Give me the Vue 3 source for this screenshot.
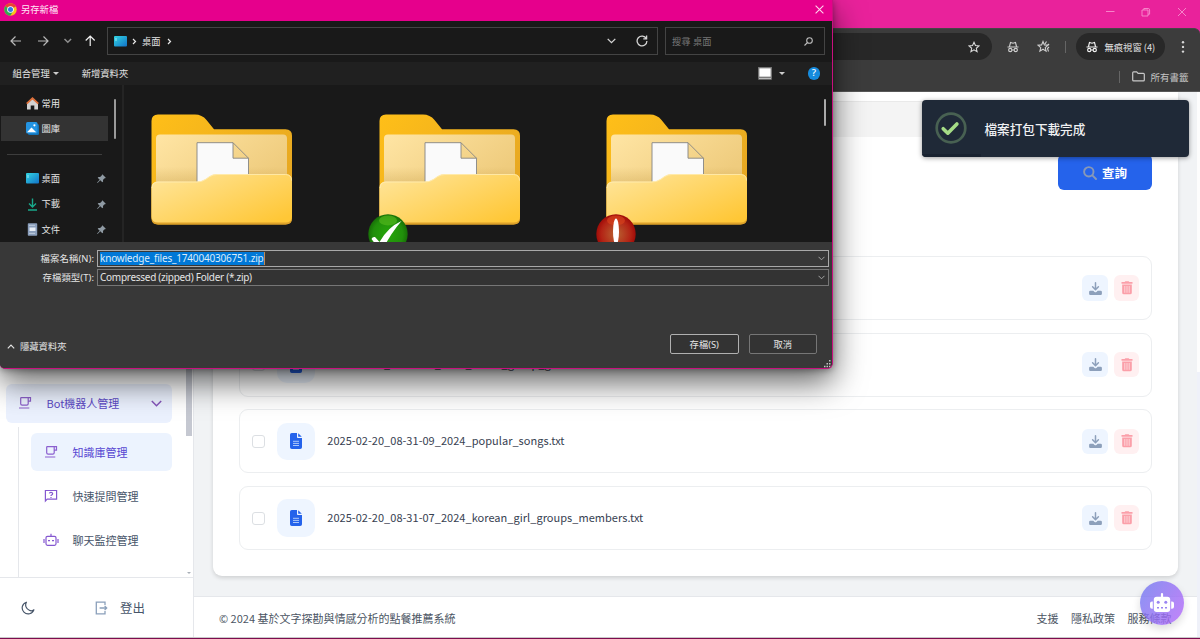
<script setup>
const files = [
  '2025-02-20_08-31-12_2024_taiwan_bands.txt',
  '2025-02-20_08-31-11_2024_tiktok_group_gala.txt',
  '2025-02-20_08-31-09_2024_popular_songs.txt',
  '2025-02-20_08-31-07_2024_korean_girl_groups_members.txt'
]
const folders = ['', 'ok', 'bad']
const pinned = [
  { name: '桌面', icon: 'desktop' },
  { name: '下載', icon: 'down' },
  { name: '文件', icon: 'doc' }
]
</script>

<template>
  <div class="screen">
    <header class="titlebar">
      <svg class="winbtns" width="90" height="12" viewBox="0 0 90 12" fill="none" stroke="#f78fce" stroke-width="0.9">
        <path d="M1 5.500h8.500M37 4h6v6h-6zM38.800 4V2.500h4.400q1.400 0 1.400 1.400v4.300H43M73 2l8 8M81 2l-8 8" />
      </svg>
    </header>
    <div class="chrome">
      <div class="toolbar">
        <div class="omnibox">
          <svg width="12" height="12" viewBox="0 0 24 24" fill="none" stroke="#dcdcdc" stroke-width="2.1"><path d="M12 2.500l2.900 6.600 7.100.7-5.400 4.700 1.600 7L12 17.800 5.800 21.500l1.600-7L2 9.800l7.100-.7z" /></svg>
        </div>
        <svg class="ext1" width="12" height="12" viewBox="0 0 24 24" fill="none" stroke="#cfcfcf" stroke-width="2.200"><path d="M1 12h22M5 11l2-8 5 1.500L17 3l2 8M10 18h4" /><circle cx="6.500" cy="18" r="3.300" /><circle cx="17.500" cy="18" r="3.300" /></svg>
        <svg class="ext2" width="14" height="13" viewBox="0 0 28 26" fill="none" stroke="#cfcfcf" stroke-width="2.200"><path d="M12 3l2.800 6.800 7.200.7-5.500 4.700 1.700 7L12 18.500 5.800 22.200l1.700-7L2 10.500l7.200-.7zM19 3l-3 5M24 8l-3 3M24 14l-3 3 2 6" /></svg>
        <i class="sep"></i>
        <div class="incog">
          <svg width="12" height="12" viewBox="0 0 24 24" fill="none" stroke="#f2f2f2" stroke-width="2.300"><path d="M1 12h22M5 11l2-8 5 1.500L17 3l2 8M10 18h4" /><circle cx="6.500" cy="18" r="3.300" /><circle cx="17.500" cy="18" r="3.300" /></svg>
          <span>無痕視窗 (4)</span>
        </div>
        <svg class="dots" width="4" height="14" viewBox="0 0 4 14" fill="#d8d8d8"><circle cx="2" cy="2.200" r="1.200" /><circle cx="2" cy="6.900" r="1.200" /><circle cx="2" cy="11.600" r="1.200" /></svg>
      </div>
      <div class="bookmarks">
        <i class="sep"></i>
        <svg width="13" height="11" viewBox="0 0 13 11" fill="none" stroke="#c8c8c8" stroke-width="1.200"><path d="M.7 1.800q0-.9.900-.9h3.100l1.400 1.400h5.300q.9 0 .9.900v5.700q0 .9-.9.900H1.600q-.9 0-.9-.9z" /></svg>
        <span>所有書籤</span>
      </div>
    </div>

    <div class="page">
      <aside class="side">
        <div class="sidebody">
          <nav>
            <div class="parent">
              <svg width="14" height="14" viewBox="0 0 14 14" fill="none" stroke="#8b5fc7" stroke-width="1.200"><path d="M2.700 1.600h9.800v3.600h-2.300M2.700 1.600v6.200q0 1.400 1.400 1.400h4.700q1.400 0 1.400-1.400V1.600M1 12h10.300" /></svg>
              <span>Bot機器人管理</span>
              <svg class="chev" width="11" height="7" viewBox="0 0 11 7" fill="none" stroke="#8454ba" stroke-width="1.500"><path d="M.8 1l4.700 4.700L10.200 1" /></svg>
            </div>
            <div class="subs">
              <div class="sub on">
                <svg width="14" height="14" viewBox="0 0 14 14" fill="none" stroke="#8b5fcf" stroke-width="1.200"><path d="M2.700 1.600h9.800v3.600h-2.300M2.700 1.600v6.200q0 1.400 1.400 1.400h4.700q1.400 0 1.400-1.400V1.600M1 12h10.300" /></svg>
                <span>知識庫管理</span>
              </div>
              <div class="sub">
                <svg width="14" height="14" viewBox="0 0 14 14" fill="none" stroke="#8558d0" stroke-width="1.200"><path d="M1.400 12V1.500h11.200v8.700H3.200zM5.300 4.400Q5.500 3.300 7 3.300t1.700 1.200Q8.700 5.400 7.600 6 7 6.300 7 7M7 7.900v1.100" /></svg>
                <span>快速提問管理</span>
              </div>
              <div class="sub">
                <svg class="bot" width="16" height="14" viewBox="0 0 16 14" fill="none" stroke="#8558d0" stroke-width="1.200"><path d="M8 3.300V.7M4.500 3.300h7q1.500 0 1.500 1.500v6q0 1.500-1.500 1.500h-7q-1.500 0-1.500-1.500v-6q0-1.500 1.500-1.500zM1 6v4M15 6v4M5 7.600h2M9 7.600h2" /></svg>
                <span>聊天監控管理</span>
              </div>
            </div>
          </nav>
          <div class="track"><i class="thumb"></i><i class="arrow"></i></div>
        </div>
        <div class="sidefoot">
          <svg width="14" height="14" viewBox="0 0 14 14" fill="none" stroke="#475569" stroke-width="1.200" stroke-linejoin="round"><path d="M5.400 1.200A6 6 0 1 0 12.900 8.800 4 4 0 0 1 8.300 9.300 5.700 5.700 0 0 1 5.400 1.200z" /></svg>
          <svg class="exit" width="13" height="14" viewBox="0 0 13 14" fill="none" stroke="#8ba0bb" stroke-width="1.300"><path d="M10 4.100V1.200H1.300v11.600H10V9.900M4.600 7h7M9.600 4.900L11.700 7 9.600 9.100" /></svg>
          <span>登出</span>
        </div>
      </aside>
      <main>
        <div class="card">
          <div class="band"></div>
          <div class="query">
            <svg width="14" height="14" viewBox="0 0 14 14" fill="none" stroke="#8798b7" stroke-width="1.900" stroke-linecap="round"><circle cx="5.800" cy="5.800" r="4.700" /><path d="M9.400 9.400l3.600 3.600" /></svg>
            <span>查詢</span>
          </div>
          <ul class="list">
            <li v-for="f in files" :key="f">
              <i class="check"></i>
              <div class="fileicon">
                <svg width="12" height="16" viewBox="0 0 12 16"><path fill="#2563eb" d="M1.800 0H7v4.200q0 .8.800.8H12v9.200q0 1.800-1.800 1.800H1.800Q0 16 0 14.200V1.800Q0 0 1.800 0z" /><path fill="#2563eb" d="M8.200.2v3.600h3.600z" /><path stroke="#bcd3fb" stroke-width=".9" d="M3 8.300h6M3 10.400h6M3 12.500h6" /></svg>
              </div>
              <span class="name">{{ f }}</span>
              <div class="act dl">
                <svg width="13" height="13" viewBox="0 0 13 13"><path d="M6.500.8v6.400M3.600 4.800l2.900 2.900 2.900-2.900" fill="none" stroke="#8da0bb" stroke-width="1.500" stroke-linecap="round" stroke-linejoin="round" /><path fill="#8da0bb" d="M1.300 8.800h3l1.300 1.100q.9.700 1.800 0l1.300-1.100h3q1.200 0 1.200 1.200v1.700q0 1.200-1.200 1.200H1.300Q.1 12.900.1 11.700V10q0-1.200 1.200-1.200z" /></svg>
              </div>
              <div class="act rm">
                <svg width="12" height="14" viewBox="0 0 12 14"><path fill="#fb9fa9" d="M.5 1h3.200l.6-.8h3.400l.6.800h3.200v1.700H.5zM1.200 3.500h9.600v8.200q0 1.600-1.600 1.600H2.800q-1.600 0-1.600-1.600z" /><path stroke="#fee3e6" stroke-width=".8" d="M3.800 5v6.800M6 5v6.800M8.200 5v6.800" /></svg>
              </div>
            </li>
          </ul>
        </div>
        <footer>
          <span>© 2024 基於文字探勘與情感分析的點餐推薦系統</span>
          <span class="l1">支援</span><span class="l2">隱私政策</span><span class="l3">服務條款</span>
        </footer>
      </main>
      <div class="pagebar"><i></i></div>
    </div>
    <div class="edge"></div>

    <div class="toast">
      <svg width="32" height="32" viewBox="0 0 32 32" fill="none"><circle cx="16" cy="16" r="14.300" stroke="#486152" stroke-width="2.700" /><path d="M8.200 16.700l4.600 4.500L21.900 12" stroke="#a5dc86" stroke-width="3.600" stroke-linecap="round" stroke-linejoin="round" /></svg>
      <span>檔案打包下載完成</span>
      <i class="progress"></i>
    </div>

    <div class="fab">
      <svg width="24" height="20" viewBox="0 0 24 20"><path fill="#fff" d="M12 0q1.100 0 1.100 1.100v2.600h4.200q2.900 0 2.900 2.900v9.500q0 2.900-2.900 2.900H6.700q-2.900 0-2.900-2.900V6.600q0-2.900 2.900-2.900h4.200V1.100Q10.900 0 12 0zM2.800 8.500v7.300H2q-2 0-2-2v-3.300q0-2 2-2zM21.200 8.500v7.300h.8q2 0 2-2v-3.300q0-2-2-2z" /><g fill="#9a84f2"><circle cx="8.200" cy="9.200" r="1.500" /><circle cx="15.800" cy="9.200" r="1.500" /><path d="M7 14h2v1.400H7zM11 14h2v1.400h-2zM15 14h2v1.400h-2z" /></g></svg>
    </div>

    <section class="dialog">
      <div class="dtitle">
        <svg width="13" height="13" viewBox="0 0 26 26"><circle cx="13" cy="13" r="12.500" fill="#fbc21a" /><path fill="#e94235" d="M13 13L2.200 6.700A12.500 12.500 0 0 1 23.800 6.800z" /><path fill="#34a853" d="M13 13L2.200 6.700A12.500 12.500 0 0 0 12.500 25.500l6-9.500z" /><circle cx="13" cy="13" r="6.600" fill="#fff" /><circle cx="13" cy="13" r="5" fill="#3478e8" /></svg>
        <span>另存新檔</span>
        <svg class="x" width="9" height="9" viewBox="0 0 9 9" stroke="#ffd3ee" stroke-width="1.100"><path d="M.6.6l7.800 7.800M8.400.6L.6 8.400" /></svg>
      </div>
      <div class="dnav">
        <svg class="arrows" width="96" height="14" viewBox="0 0 96 14" fill="none" stroke-width="1.200"><path stroke="#b9b9b9" d="M11 7H1M5.500 2.500L1 7l4.500 4.500M28 7h10M33.500 2.500L38 7l-4.500 4.500" /><path stroke="#8f8f8f" stroke-width="1.500" d="M54.500 5l3.300 3.300L61.100 5" /><path stroke="#f2f2f2" d="M80.200 12V2M75.700 6.500L80.200 2l4.500 4.500" /></svg>
        <div class="addr">
          <svg width="13" height="11" viewBox="0 0 13 11"><defs><linearGradient id="dk" x1="0" y1="0" x2="1" y2="1"><stop offset="0" stop-color="#32d5e2" /><stop offset="1" stop-color="#1272c8" /></linearGradient></defs><rect width="13" height="10.500" rx="1" fill="url(#dk)" /><path stroke="#b6f4f8" stroke-width=".8" d="M2 2v3" /></svg>
          <svg class="gt" width="5" height="7" viewBox="0 0 5 7" fill="none" stroke="#e8e8e8" stroke-width="1.200"><path d="M1 1l2.500 2.500L1 6" /></svg>
          <span>桌面</span>
          <svg class="gt2" width="5" height="7" viewBox="0 0 5 7" fill="none" stroke="#e8e8e8" stroke-width="1.200"><path d="M1 1l2.500 2.500L1 6" /></svg>
          <svg class="dd" width="9" height="6" viewBox="0 0 9 6" fill="none" stroke="#d5d5d5" stroke-width="1.300"><path d="M.7.900l3.800 3.800L8.300.9" /></svg>
          <svg class="rf" width="12" height="12" viewBox="0 0 12 12" fill="none" stroke="#d5d5d5" stroke-width="1.300"><path d="M10.300 3.600A4.900 4.900 0 1 0 10.900 6M10.600.6v3.200H7.300" /></svg>
        </div>
        <div class="search"><span>搜尋 桌面</span>
          <svg width="9" height="9" viewBox="0 0 9 9" fill="none" stroke="#bdbdbd" stroke-width="1.100"><circle cx="5.500" cy="3.500" r="2.800" /><path d="M3.500 5.500L.5 8.500" /></svg>
        </div>
      </div>
      <div class="dtools">
        <span>組合管理</span><i class="tri"></i><span class="newf">新增資料夾</span>
        <svg class="view" width="14" height="13" viewBox="0 0 14 13"><rect x=".7" y=".7" width="12.600" height="9.600" fill="#fff" stroke="#777" stroke-width="1.300" /><path fill="#bbb" stroke="#666" stroke-width=".6" d="M.5 10.500h13v2H.5z" /></svg>
        <i class="tri t2"></i><b class="help">?</b>
      </div>
      <div class="dbody">
        <div class="tree">
          <div class="node">
            <svg width="13" height="13" viewBox="0 0 13 13"><path fill="#d2d2d2" d="M1 6L6.500 1.500 12 6v6.500H8.300V8.600H4.700v3.900H1z" /><path fill="none" stroke="#df713b" stroke-width="1.800" d="M.7 6.600L6.500 1.300l5.800 5.300" /></svg><span>常用</span>
          </div>
          <div class="node sel">
            <svg width="13" height="13" viewBox="0 0 13 13"><rect x="2" y="2" width="11" height="11" rx="1.500" fill="#1273b8" /><rect width="11.500" height="11.500" rx="1.500" fill="#2494e2" /><path fill="#fff" d="M1 10.200L5.500 5.600l4.700 4.600z" /><circle cx="8.400" cy="3.300" r="1.100" fill="#fff" /></svg><span>圖庫</span>
          </div>
          <hr>
          <div v-for="p in pinned" :key="p.name" class="node">
            <svg v-if="p.icon === 'desktop'" width="13" height="11" viewBox="0 0 13 11"><rect width="13" height="10.500" rx="1" fill="url(#dk)" /><path stroke="#b6f4f8" stroke-width=".8" d="M2 2v3" /></svg>
            <svg v-else-if="p.icon === 'down'" width="13" height="13" viewBox="0 0 13 13" fill="none" stroke="#19a88b" stroke-width="1.400"><path d="M6.500.5v8.300M3 5.600l3.500 3.500L10 5.600M2 12h9" /></svg>
            <svg v-else width="13" height="13" viewBox="0 0 13 13"><rect x="1.800" y=".2" width="9.400" height="12.600" rx=".8" fill="#8b9fbc" /><rect x="3.500" y="4.500" width="6" height="3.500" fill="#e8eef6" /><path stroke="#c9d5e5" stroke-width=".8" d="M3 2.300h6M3 10.400h6" /></svg>
            <span>{{ p.name }}</span>
            <svg class="pin" width="9" height="9" viewBox="0 0 9 9"><path fill="#8f9aa3" d="M5.300.2l3.500 3.500-.9.700-.5-.1-1.400 1.600.1 1.600-.8.800L3.300 6.300.6 8.900.1 8.400 2.700 5.700.7 3.700l.8-.8 1.600.1L4.700 1.600z" /></svg>
          </div>
        </div>
        <div class="treebar"><i></i></div>
        <div class="files">
          <div v-for="(k, i) in folders" :key="i" class="folder">
            <svg width="142" height="111" viewBox="0 0 142 111">
              <defs>
                <linearGradient id="bk" x1="0" y1="0" x2="1" y2=".7"><stop offset="0" stop-color="#ffbf18" /><stop offset="1" stop-color="#e5a623" /></linearGradient>
                <linearGradient id="pn" x1="0" y1="0" x2="1" y2=".5"><stop offset="0" stop-color="#ffe5a4" /><stop offset="1" stop-color="#efcc7e" /></linearGradient>
                <linearGradient id="ft" x1="0" y1="0" x2="1" y2=".85"><stop offset="0" stop-color="#ffe69d" /><stop offset="1" stop-color="#ffc736" /></linearGradient>
                <linearGradient id="sh" x1="0" y1="0" x2="0" y2="1"><stop offset=".6" stop-color="#a77a1d" stop-opacity="0" /><stop offset="1" stop-color="#a77a1d" stop-opacity=".2" /></linearGradient>
              </defs>
              <path fill="url(#bk)" d="M.5 7Q.5.5 7 .5h37q7 0 11.500 5.500L63 15.300h71.500q6.500 0 6.500 6.500V104q0 6.500-6.500 6.500H7Q.5 110.500.5 104z" />
              <rect x="5" y="20.500" width="131" height="50" rx="4" fill="url(#pn)" />
              <rect x="5" y="30" width="131" height="38" fill="url(#sh)" />
              <path fill="#fafafa" stroke="#858585" stroke-width=".9" d="M46 75V28.700h36l15.500 15.500V75zM82 28.700v15.500h15.500" />
              <path fill="#dda12a" d="M.5 73v31q0 6.500 6.500 6.500h127.500q6.500 0 6.500-6.500V73z" />
              <path fill="url(#ft)" d="M.5 74q0-6.500 6.500-6.500h39q5 0 9-2.800l3.500-2.500q3.500-2.200 7.500-2.200h68.500q6.500 0 6.500 6.500v36q0 6-6.500 6H7q-6.500 0-6.500-6z" />
              <path fill="none" stroke="#ffefbd" stroke-width=".7" d="M1 74q0-6 6-6h39q5 0 9-2.800l3.500-2.500q3.500-2.200 7.500-2.200h68.500q6 0 6 6" />
            </svg>
            <svg v-if="k" class="badge" width="40" height="40" viewBox="0 0 40 40">
              <defs>
                <radialGradient id="gr"><stop offset="0" stop-color="#26a60a" /><stop offset=".75" stop-color="#218f0b" /><stop offset="1" stop-color="#177006" /></radialGradient>
                <radialGradient id="rd"><stop offset="0" stop-color="#b96432" /><stop offset=".75" stop-color="#b32315" /><stop offset="1" stop-color="#a00c08" /></radialGradient>
              </defs>
              <circle cx="20" cy="20" r="19.700" :fill="k === 'ok' ? 'url(#gr)' : 'url(#rd)'" />
              <ellipse cx="20" cy="6.500" rx="9" ry="5" :fill="k === 'ok' ? '#54b81d' : '#d8441d'" opacity=".65" />
              <path v-if="k === 'ok'" fill="#fff" d="M3.500 25q1-2.500 3.500-2l4.500 5Q20 13 33.500 7 23 19 15 35h-4z" />
              <ellipse v-else cx="20" cy="17.500" rx="3" ry="13" fill="#fff" />
            </svg>
          </div>
        </div>
        <div class="filebar"><i></i></div>
      </div>
      <div class="dform">
        <div class="field first"><label>檔案名稱(N):</label><div class="box"><mark>knowledge_files_1740040306751.zip</mark><svg width="7" height="5" viewBox="0 0 7 5" fill="none" stroke="#a5a5a5"><path d="M.5.800l3 3 3-3" /></svg></div></div>
        <div class="field"><label>存檔類型(T):</label><div class="box"><span class="kind">Compressed (zipped) Folder (*.zip)</span><svg width="7" height="5" viewBox="0 0 7 5" fill="none" stroke="#a5a5a5"><path d="M.5.800l3 3 3-3" /></svg></div></div>
        <div class="dfoot">
          <svg width="8" height="5" viewBox="0 0 8 5" fill="none" stroke="#e2e2e2" stroke-width="1.200"><path d="M.8 4.300L4 1.100l3.200 3.200" /></svg>
          <span>隱藏資料夾</span>
          <button class="save">存檔(S)</button><button>取消</button>
        </div>
      </div>
      <svg class="grip" width="8" height="8" viewBox="0 0 8 8" fill="#c4c4c4"><path d="M6 0h1.500v1.500H6zM3.500 3H5v1.500H3.500zM6 3h1.500v1.500H6zM1 5.800h1.500v1.500H1zM3.500 5.800H5v1.500H3.500zM6 5.800h1.500v1.500H6z" /></svg>
    </section>
  </div>
</template>

<style>
html, body { margin: 0; overflow: hidden; }
</style>

<style scoped>
* { box-sizing: border-box; }
.screen { position: relative; width: 1200px; height: 639px; overflow: hidden; display: flex; flex-direction: column; background: #fff; font-family: "Noto Sans CJK TC", sans-serif; font-size: 11px; color: #475569; white-space: nowrap; }
svg { display: block; flex: none; }
i { display: block; flex: none; }
.titlebar { height: 34px; background: #e9229b; display: flex; justify-content: flex-end; align-items: flex-start; }
.winbtns { margin: 6px 5px 0 0; width: 90px; }
.chrome { height: 64px; margin-top: -6px; background: #3c3c3c; border-top: 1px solid #464646; border-bottom: 1px solid #5a5a5a; border-radius: 0 6px 0 0; color: #ddd; }
.toolbar { display: flex; align-items: center; height: 35px; }
.omnibox { width: 992px; height: 27px; border-radius: 0 14px 14px 0; background: #282828; display: flex; align-items: center; justify-content: flex-end; padding-right: 12px; }
.ext1 { margin-left: 15px; }
.ext2 { margin-left: 17.500px; }
.sep { width: 1px; height: 12px; background: #656565; }
.toolbar .sep { margin-left: 14.500px; }
.incog { margin-left: 10px; width: 89px; height: 27px; border-radius: 14px; background: #282828; display: flex; align-items: center; gap: 7px; padding-left: 9.500px; font-size: 9.300px; color: #e4e4e4; }
.incog span { padding-top: 1px; }
.dots { margin-left: 16px; }
.bookmarks { height: 26px; display: flex; align-items: center; padding-left: 1118.500px; padding-bottom: 1px; color: #c5c5c5; font-size: 9.500px; }
.bookmarks svg { margin: 0 6px 0 12px; }
.page { height: 545px; display: flex; background: #f1f3f5; }
.side { width: 194px; background: #fff; border-right: 1px solid #e5e7eb; display: flex; flex-direction: column; }
.sidebody { height: 486px; display: flex; border-bottom: 1px solid #e5e7eb; }
nav { width: 172px; padding-left: 6px; display: flex; flex-direction: column; justify-content: flex-end; }
.parent { height: 39.500px; margin-bottom: 4px; border-radius: 6px; background: #ebf1fe; color: #5b48c4; display: flex; align-items: center; padding: 0 10px 0 12px; }
.parent span { margin-left: 14.500px; flex: 1; }
.subs { margin-left: 12px; padding: 6px 0 18px 12px; border-left: 1px solid #e5e7eb; display: flex; flex-direction: column; gap: 6px; }
.sub { height: 38px; border-radius: 6px; display: flex; align-items: center; gap: 14.500px; padding-left: 13px; color: #475569; }
.sub.on { background: #ecf3fe; color: #5646d2; }
.sub .bot { margin: 0 -1px; }
.track { width: 21px; display: flex; flex-direction: column; justify-content: space-between; align-items: flex-end; padding: 100px 1px 3px 0; }
.thumb { width: 6px; height: 244px; background: #c5c8d1; }
.arrow { width: 0; border: 2px solid transparent; border-top-color: #a9b0b8; border-bottom: 0; margin-right: 1px; }
.sidefoot { flex: 1; display: flex; align-items: center; padding-left: 21px; font-size: 12.500px; }
.exit { margin: 0 12px 0 60px; }
main { width: 1003px; display: flex; flex-direction: column; }
.card { width: 965px; height: 484px; margin-left: 19px; background: #fff; border-radius: 0 0 9px 9px; box-shadow: 0 2px 4px rgba(0,0,0,.14); padding-top: 9px; display: flex; flex-direction: column; }
.band { width: 913px; height: 36px; margin-left: 26px; background: #f4f4f4; border-top: 1px solid #e9e9e9; }
.query { align-self: flex-end; width: 94px; height: 36px; margin: 17px 26px 0 0; border-radius: 6px; background: #2563eb; color: #fff; display: flex; align-items: center; gap: 5px; padding: 1px 0 0 25px; font-size: 12.500px; font-weight: 700; }
.list { list-style: none; margin: 66px 26px 0; padding: 0; display: flex; flex-direction: column; gap: 12.700px; }
.list li { height: 64px; border: 1px solid #eceef0; border-radius: 9px; display: flex; align-items: center; padding: 0 11.700px 0 12px; }
.check { width: 13px; height: 13px; border: 1px solid #dcdfe3; border-radius: 3px; }
.fileicon { width: 37.500px; height: 37.500px; margin: 0 12.800px 0 12px; border-radius: 10px; background: #eef5ff; display: flex; align-items: center; justify-content: center; }
.name { flex: 1; color: #374151; font-size: 11px; letter-spacing: .03px; padding-bottom: 3px; }
.act { width: 25.500px; height: 25.500px; border-radius: 6px; display: flex; align-items: center; justify-content: center; margin-left: 6px; }
.dl { background: #eef5ff; }
.rm { background: #fff0f1; }
footer { margin-top: 20px; flex: 1; background: #fff; border-top: 1px solid #e5e7eb; display: flex; align-items: center; padding: 1px 25.500px 0 25px; color: #4b5563; }
.l1 { margin-left: auto; }
.l2, .l3 { margin-left: 12.500px; }
.pagebar { width: 3px; background: #eff1f9; }
.pagebar i { height: 280px; background: #fdfdfd; }
.edge { height: 2px; background: #7c0c4e; border-top: 1px solid #c9c9c9; }
.toast { position: absolute; left: 922px; top: 100px; width: 267px; height: 56.500px; border-radius: 4px; background: #1f2937; color: #f0f1f3; display: flex; align-items: center; padding-left: 12.500px; gap: 18px; font-size: 12.600px; font-weight: 500; box-shadow: 0 1px 5px rgba(0,0,0,.4); overflow: hidden; }
.progress { position: absolute; left: 0; bottom: 0; width: 59px; height: 3px; background: #192230; }
.fab { position: absolute; left: 1140px; top: 581px; width: 44px; height: 44px; border-radius: 50%; background: linear-gradient(120deg, rgba(112,123,240,.82), rgba(180,100,248,.8)); box-shadow: 0 4px 8px rgba(0,0,0,.14); display: flex; align-items: center; justify-content: center; }
.dialog { position: absolute; left: 0; top: 0; width: 833px; height: 369px; border: solid #c8107e; border-width: 0 1px 1px 0; border-radius: 0 0 6px 5px; background: #383838; box-shadow: 0 13px 32px rgba(0,0,0,.62), 0 1px 7px rgba(0,0,0,.35); overflow: hidden; color: #e4e4e4; font-family: "Noto Sans", "Noto Sans CJK TC", sans-serif; font-size: 9.300px; display: flex; flex-direction: column; }
.dtitle { height: 21px; background: #e6008c; color: #ffe6f5; display: flex; align-items: center; padding: 0 8.500px 3px 4px; }
.dtitle span { margin-left: 4px; flex: 1; padding-bottom: 1px; }
.dnav { height: 40.500px; background: #191919; display: flex; align-items: center; }
.dnav span { padding-bottom: 1px; }
.arrows { margin-left: 10px; }
.addr { width: 551px; height: 28px; margin-left: 1px; border: 1px solid #444; display: flex; align-items: center; padding-left: 5.500px; }
.gt { margin: 0 5px 0 5.500px; }
.gt2 { margin-left: 6px; }
.dd { margin-left: auto; }
.rf { margin: 0 9px 0 20px; }
.search { width: 160px; height: 28px; margin-left: 7px; border: 1px solid #444; display: flex; align-items: center; justify-content: space-between; padding: 0 11.500px 0 6px; color: #777; }
.dtools { height: 23.500px; background: #202020; display: flex; align-items: center; padding-left: 12.500px; }
.tri { width: 0; border: 3px solid transparent; border-top-color: #ccc; border-bottom: 0; margin-left: 3.500px; }
.newf { margin-left: 22.500px; }
.dtools span { padding-bottom: 1px; }
.view { margin-left: auto; }
.t2 { margin-left: 7px; }
.help { width: 12.500px; height: 12.500px; margin: 0 12px 0 23px; border-radius: 50%; background: #168bdd; color: #fff; font-size: 9.500px; line-height: 12px; text-align: center; font-weight: 500; }
.dbody { height: 157px; background: #191919; display: flex; }
.tree { width: 108px; padding-top: 6px; }
.node { height: 25.200px; display: flex; align-items: center; padding: 0 2px 0 24.500px; margin-left: 1px; }
.node.sel { background: #333; }
.node span { margin-left: 3px; padding-bottom: 1.500px; }
.pin { margin-left: auto; margin-right: 0; }
hr { border: 0; height: 1px; margin: 12.500px 6px 11.500px 7px; background: #3d3d3d; }
.treebar { width: 16px; border-right: 2px solid #242424; padding: 14px 0 0 6px; }
.treebar i { width: 2px; height: 40px; background: #9a9a9a; border-radius: 1px; }
.files { flex: 1; display: flex; gap: 85.500px; padding: 28.500px 0 0 27px; }
.folder { position: relative; width: 142px; flex: none; }
.badge { position: absolute; left: -10.500px; top: 100px; }
.filebar { width: 8px; padding-top: 14px; }
.filebar i { width: 2px; height: 27px; background: #aaa; border-radius: 1px; }
.dform { flex: 1; background: #383838; display: flex; flex-direction: column; z-index: 1; }
.field { display: flex; align-items: center; height: 17px; margin-top: 2px; }
.first { margin-top: 8px; }
label { width: 94px; text-align: right; margin-right: 3px; font-size: 9.400px; letter-spacing: .08px; padding-bottom: 1px; }
.box { width: 732px; height: 17px; border: 1px solid #767676; background: #333; display: flex; align-items: center; justify-content: space-between; padding: 0 3px 0 2px; font-size: 10px; }
.first .box { border-color: #a9a9a9; background: #383838; }
mark { background: #0078d7; color: #dcecfa; height: 13px; line-height: 13px; letter-spacing: -.19px; border-right: 1px solid #c08a55; }
.kind { letter-spacing: -.28px; padding-bottom: 1px; }
.dfoot { display: flex; align-items: center; height: 22px; margin: 47px 0 0; padding: 0 15px 0 7px; }
.dfoot span { margin-left: 5px; flex: 1; padding-top: 3px; }
.dfoot svg { margin-top: 4px; }
button { width: 68.500px; height: 20px; margin-left: 10px; border: 1px solid #767676; border-radius: 2px; background: #333; color: #e4e4e4; font: inherit; padding: 0; }
.save { border-color: #b0b0b0; }
.grip { position: absolute; right: 1px; bottom: 0; z-index: 2; }
</style>
